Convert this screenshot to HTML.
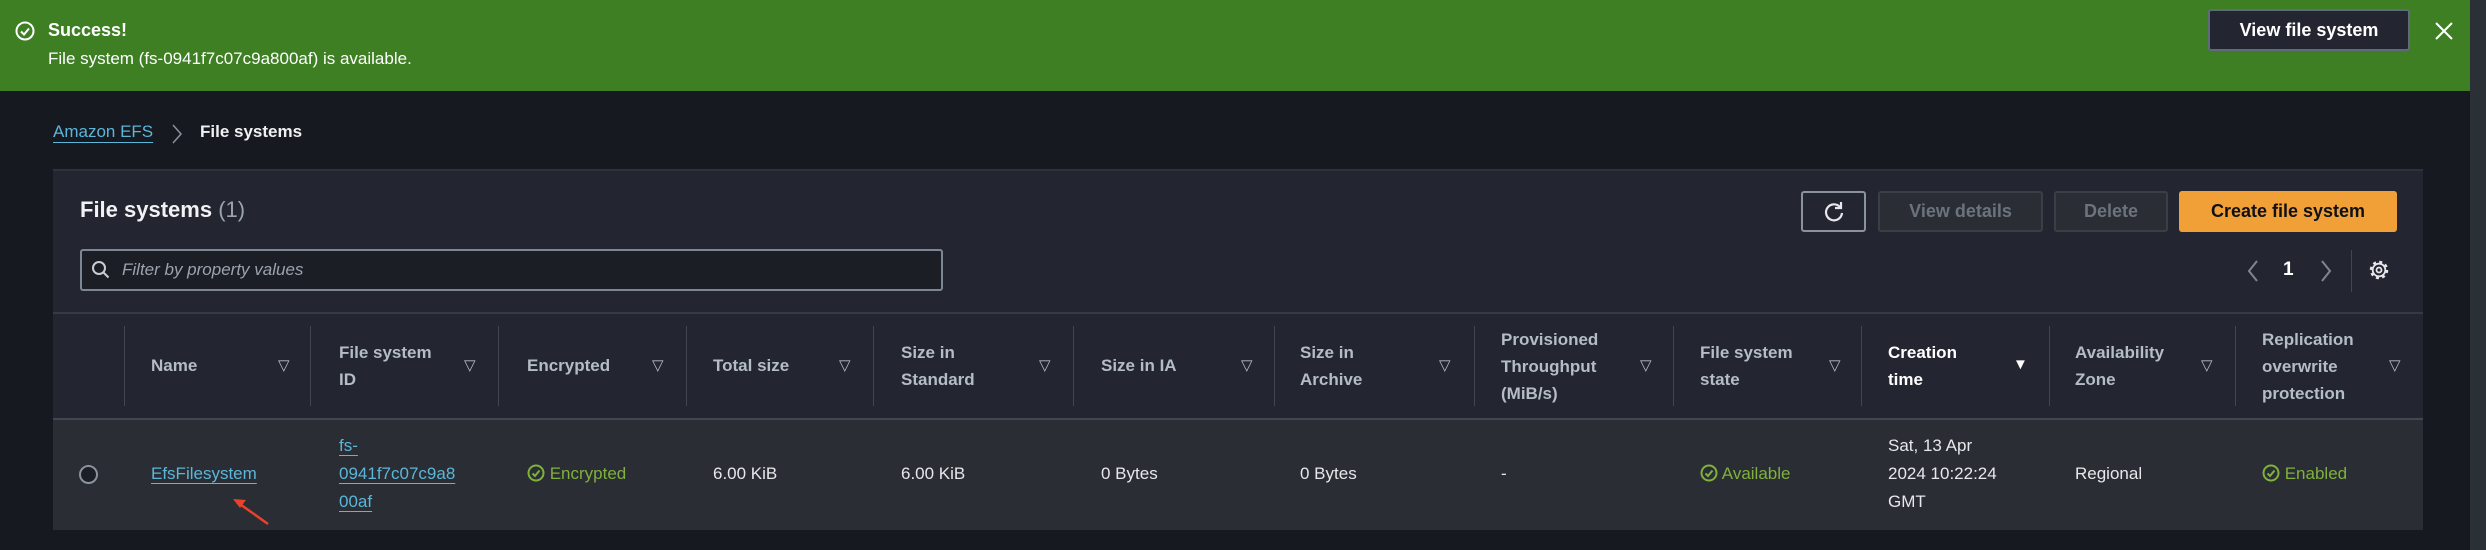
<!DOCTYPE html>
<html><head><meta charset="utf-8"><style>
*{margin:0;padding:0;box-sizing:border-box}
body{width:2486px;height:550px;background:#16191f;font-family:"Liberation Sans",sans-serif;position:relative;overflow:hidden;color:#d1d5db}
.a{position:absolute;white-space:nowrap}
.ban{left:0;top:0;width:2477px;height:91px;background:#3e7f24}
.sb{left:2470px;top:0;width:16px;height:550px;background:#2b2f36}
.btn{position:absolute;border:2px solid #5f6b7a;border-radius:3px;background:#232630;font-weight:bold;font-size:18px;display:flex;align-items:center;justify-content:center}
.panel{left:53px;top:169px;width:2370px;height:361px;background:#232630;border-top:2px solid #2e333b}
.hd{font-weight:bold;font-size:17px;color:#b4bcc6;line-height:27px}
.dv{position:absolute;top:326px;width:1px;height:80px;background:#414750}
.tri{position:absolute;top:356px;font-size:15px;color:#b4bcc6}
.cell{font-size:17px;color:#e6e8eb;line-height:28px}
.lnk{color:#5bb6d9;text-decoration:underline;text-underline-offset:4px}
.ok{color:#7fb13c}
</style></head><body>
<div class="a ban"></div>
<svg class="a" style="left:15px;top:21px" width="20" height="20" viewBox="0 0 20 20"><circle cx="10" cy="10" r="8.5" fill="none" stroke="#fff" stroke-width="2"/><path d="M6 10.5l3 3 5-6" fill="none" stroke="#fff" stroke-width="2"/></svg>
<div class="a" style="left:48px;top:20px;font-size:18px;font-weight:bold;color:#fff">Success!</div>
<div class="a" style="left:48px;top:49px;font-size:17px;color:#fff">File system (fs-0941f7c07c9a800af) is available.</div>
<div class="btn" style="left:2208px;top:9px;width:202px;height:42px;color:#fff">View file system</div>
<svg class="a" style="left:2434px;top:21px" width="20" height="20"><path d="M2 2l16 16M18 2L2 18" stroke="#fff" stroke-width="2"/></svg>
<div class="a sb"></div>

<div class="a" style="left:53px;top:122px;font-size:17px;color:#5bb6d9;text-decoration:underline;text-underline-offset:5px">Amazon EFS</div>
<svg class="a" style="left:171px;top:123px" width="12" height="22"><path d="M2 2l8 9-8 9" fill="none" stroke="#8a929c" stroke-width="1.5"/></svg>
<div class="a" style="left:200px;top:122px;font-size:17px;font-weight:bold;color:#eef0f2">File systems</div>

<div class="a panel"></div>
<div class="a" style="left:80px;top:197px;font-size:22px;font-weight:bold;color:#f0f2f4">File systems <span style="font-weight:normal;color:#9ba3ad">(1)</span></div>
<div class="a" style="left:80px;top:249px;width:863px;height:42px;border:2px solid #7d8793;border-radius:3px;background:#1b1e25"></div>
<svg class="a" style="left:91px;top:260px" width="20" height="20"><circle cx="8" cy="8" r="6" fill="none" stroke="#c8cdd3" stroke-width="2"/><path d="M12.5 12.5l5 5" stroke="#c8cdd3" stroke-width="2"/></svg>
<div class="a" style="left:122px;top:260px;font-size:17px;font-style:italic;color:#9ba3ad">Filter by property values</div>

<div class="btn" style="left:1801px;top:191px;width:65px;height:41px;border-color:#8a929c"><svg width="24" height="24" viewBox="0 0 24 24"><path d="M18 7A8 8 0 1 0 20 13" fill="none" stroke="#e6e8eb" stroke-width="2.2"/><path d="M19 2v6h-6" fill="none" stroke="#e6e8eb" stroke-width="2.2"/></svg></div>
<div class="btn" style="left:1878px;top:191px;width:165px;height:41px;border-color:#3a3f47;background:#2a2d34;color:#6b737d">View details</div>
<div class="btn" style="left:2054px;top:191px;width:114px;height:41px;border-color:#3a3f47;background:#2a2d34;color:#6b737d">Delete</div>
<div class="btn" style="left:2179px;top:191px;width:218px;height:41px;border:none;background:#f0a037;color:#0f1115">Create file system</div>

<svg class="a" style="left:2246px;top:259px" width="14" height="24"><path d="M11 2L3 12l8 10" fill="none" stroke="#7d8793" stroke-width="2"/></svg>
<div class="a" style="left:2283px;top:259px;font-size:19px;font-weight:bold;color:#fff">1</div>
<svg class="a" style="left:2319px;top:259px" width="14" height="24"><path d="M3 2l8 10-8 10" fill="none" stroke="#7d8793" stroke-width="2"/></svg>
<div class="a" style="left:2351px;top:250px;width:1px;height:42px;background:#414750"></div>
<svg class="a" style="left:2368px;top:259px" width="22" height="22" viewBox="0 0 22 22"><circle cx="11" cy="11" r="8" fill="none" stroke="#e6e8eb" stroke-width="2.5" stroke-dasharray="3 3.28"/><circle cx="11" cy="11" r="6.3" fill="none" stroke="#e6e8eb" stroke-width="1.8"/><circle cx="11" cy="11" r="2.5" fill="none" stroke="#e6e8eb" stroke-width="1.8"/></svg>

<div class="a" style="left:53px;top:312px;width:2370px;height:2px;background:#363b43"></div>
<div class="a" style="left:53px;top:418px;width:2370px;height:112px;background:#2a2d33;border-top:2px solid #414750"></div>

<div class="dv" style="left:124px"></div><div class="dv" style="left:310px"></div><div class="dv" style="left:498px"></div><div class="dv" style="left:686px"></div><div class="dv" style="left:873px"></div><div class="dv" style="left:1073px"></div><div class="dv" style="left:1274px"></div><div class="dv" style="left:1474px"></div><div class="dv" style="left:1673px"></div><div class="dv" style="left:1861px"></div><div class="dv" style="left:2049px"></div><div class="dv" style="left:2235px"></div>

<div class="a hd" style="left:151px;top:352px">Name</div>
<div class="a hd" style="left:339px;top:339px">File system<br>ID</div>
<div class="a hd" style="left:527px;top:352px">Encrypted</div>
<div class="a hd" style="left:713px;top:352px">Total size</div>
<div class="a hd" style="left:901px;top:339px">Size in<br>Standard</div>
<div class="a hd" style="left:1101px;top:352px">Size in IA</div>
<div class="a hd" style="left:1300px;top:339px">Size in<br>Archive</div>
<div class="a hd" style="left:1501px;top:326px">Provisioned<br>Throughput<br>(MiB/s)</div>
<div class="a hd" style="left:1700px;top:339px">File system<br>state</div>
<div class="a hd" style="left:1888px;top:339px;color:#fff">Creation<br>time</div>
<div class="a hd" style="left:2075px;top:339px">Availability<br>Zone</div>
<div class="a hd" style="left:2262px;top:326px">Replication<br>overwrite<br>protection</div>

<div class="tri" style="left:278px">▽</div><div class="tri" style="left:464px">▽</div><div class="tri" style="left:652px">▽</div><div class="tri" style="left:839px">▽</div><div class="tri" style="left:1039px">▽</div><div class="tri" style="left:1241px">▽</div><div class="tri" style="left:1439px">▽</div><div class="tri" style="left:1640px">▽</div><div class="tri" style="left:1829px">▽</div><div class="tri" style="left:2013px;color:#fff">▼</div><div class="tri" style="left:2201px">▽</div><div class="tri" style="left:2389px">▽</div>

<div class="a" style="left:79px;top:465px;width:19px;height:19px;border:2px solid #8a929c;border-radius:50%;background:#1b1e25"></div>
<div class="a cell lnk" style="left:151px;top:460px">EfsFilesystem</div>
<div class="a cell lnk" style="left:339px;top:432px">fs-<br>0941f7c07c9a8<br>00af</div>
<div class="a cell ok" style="left:527px;top:460px"><svg width="18" height="18" style="vertical-align:-3px"><circle cx="9" cy="9" r="7.5" fill="none" stroke="#7fb13c" stroke-width="2"/><path d="M5.5 9.5l2.5 2.5 4.5-5.5" fill="none" stroke="#7fb13c" stroke-width="2"/></svg> Encrypted</div>
<div class="a cell" style="left:713px;top:460px">6.00 KiB</div>
<div class="a cell" style="left:901px;top:460px">6.00 KiB</div>
<div class="a cell" style="left:1101px;top:460px">0 Bytes</div>
<div class="a cell" style="left:1300px;top:460px">0 Bytes</div>
<div class="a cell" style="left:1501px;top:460px">-</div>
<div class="a cell ok" style="left:1700px;top:460px"><svg width="18" height="18" style="vertical-align:-3px"><circle cx="9" cy="9" r="7.5" fill="none" stroke="#7fb13c" stroke-width="2"/><path d="M5.5 9.5l2.5 2.5 4.5-5.5" fill="none" stroke="#7fb13c" stroke-width="2"/></svg> Available</div>
<div class="a cell" style="left:1888px;top:432px">Sat, 13 Apr<br>2024 10:22:24<br>GMT</div>
<div class="a cell" style="left:2075px;top:460px">Regional</div>
<div class="a cell ok" style="left:2262px;top:460px"><svg width="18" height="18" style="vertical-align:-3px"><circle cx="9" cy="9" r="7.5" fill="none" stroke="#7fb13c" stroke-width="2"/><path d="M5.5 9.5l2.5 2.5 4.5-5.5" fill="none" stroke="#7fb13c" stroke-width="2"/></svg> Enabled</div>

<svg class="a" style="left:225px;top:492px" width="50" height="40"><path d="M43 32L12 10" stroke="#e8412c" stroke-width="2.5"/><path d="M8 7l13 1-6 8z" fill="#e8412c"/></svg>
</body></html>
